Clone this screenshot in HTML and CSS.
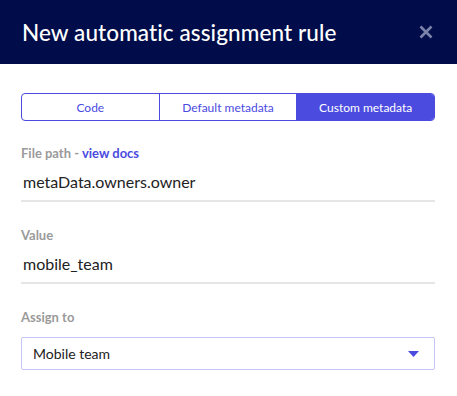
FILE: index.html
```html
<!DOCTYPE html>
<html lang="en">
<head>
    <meta charset="UTF-8">
    <title>New automatic assignment rule</title>
    <link rel="stylesheet" href="styles.css">
</head>
<body>
    <div class="modal">
        <!-- header -->
        <div class="modal-head">
            <h1>New automatic assignment rule</h1>
            <span class="close">
                <svg width="14" height="14" viewBox="0 0 14 14"><path d="M1.5 1.5L12.5 12.5M12.5 1.5L1.5 12.5" stroke="#7c83ab" stroke-width="2.6" stroke-linecap="butt"/></svg>
            </span>
        </div>
        <div class="modal-body">
            <!-- tabs -->
            <div class="tabs">
                <div class="tab">Code</div>
                <div class="tab">Default metadata</div>
                <div class="tab active">Custom metadata</div>
            </div>

            <div class="field">
                <label>File path - <a href="javascript:;">view docs</a></label>
                <div class="input">metaData.owners.owner</div>
            </div>

            <div class="field">
                <label>Value</label>
                <div class="input">mobile_team</div>
            </div>

            <div class="field">
                <label>Assign to</label>
                <div class="select">
                    <span>Mobile team</span>
                    <svg width="11" height="6" viewBox="0 0 11 6"><path d="M0 0H11L5.5 6Z" fill="#4b4bdf"/></svg>
                </div>
            </div>
        </div>
    </div>
</body>
</html>
```

FILE: styles.css
```css
*{
    padding: 0;
    margin: 0;
    box-sizing: border-box;
}
body{
    background: #fff;
    font-family: Lato, "Open Sans", sans-serif;
    color: #222;
}
.modal-head{
    height: 64px;
    background: #000d4a;
    display: flex;
    align-items: center;
    justify-content: space-between;
    padding: 0 24px 0 22px;
}
.modal-head h1{
    color: #fff;
    font-size: 22.5px;
    font-weight: 500;
    letter-spacing: 0.1px;
}
.close{
    display: flex;
}
.modal-body{
    padding: 29px 22px 0 21px;
}
.tabs{
    display: flex;
    height: 28px;
    border: 1px solid #4b4bdf;
    border-radius: 4px;
    overflow: hidden;
}
.tab{
    flex: 1;
    display: flex;
    align-items: center;
    justify-content: center;
    font-size: 12px;
    color: #4b4bdf;
    border-left: 1px solid #4b4bdf;
}
.tab:first-child{
    border-left: none;
}
.tab.active{
    background: #4b4bdf;
    color: #fff;
}
.field{
    margin-top: 25px;
}
.tabs + .field{
    margin-top: 24px;
}
.field label{
    display: block;
    font-size: 13px;
    font-weight: 700;
    color: #9a9a9a;
    line-height: 16px;
}
.field label a{
    color: #4b4bdf;
    text-decoration: none;
}
.input{
    font-size: 16px;
    line-height: 22px;
    padding: 10px 2px 7px;
    border-bottom: 2px solid #e6e6e6;
}
.select{
    margin-top: 12px;
    height: 33px;
    border: 1px solid #c5c5f4;
    border-radius: 2px;
    display: flex;
    align-items: center;
    justify-content: space-between;
    padding: 0 15px 0 11px;
    font-size: 14px;
}
```
